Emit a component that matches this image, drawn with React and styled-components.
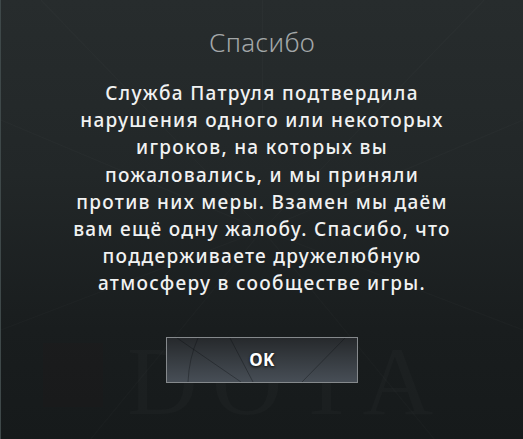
import React from "react";
import styled, { createGlobalStyle } from "styled-components";

const GlobalStyle = createGlobalStyle`
  html, body {
    margin: 0;
    padding: 0;
    background: #1b1f20;
  }
`;

// line breaks as in the game dialog
const lines = [
  "Служба Патруля подтвердила",
  "нарушения одного или некоторых",
  "игроков, на которых вы",
  "пожаловались, и мы приняли",
  "против них меры. Взамен мы даём",
  "вам ещё одну жалобу. Спасибо, что",
  "поддерживаете дружелюбную",
  "атмосферу в сообществе игры.",
];

const App = () => {
  return (
    <>
      <GlobalStyle />
      <Dialog>
        <Backdrop viewBox="0 0 523 439" preserveAspectRatio="none">
          <g stroke="rgba(255,255,255,0.02)" strokeWidth="1.2" fill="none">
            <path d="M40 0 L262 230 L484 0" />
            <path d="M0 120 L262 230 L523 120" />
            <path d="M90 439 L262 230 L434 439" />
            <path d="M0 330 L262 230 L523 330" />
            <path d="M262 0 L262 120" />
          </g>
        </Backdrop>
        <Watermark aria-hidden="true">
          <Emblem />
          <Wordmark>DOTA</Wordmark>
        </Watermark>

        <Title>Спасибо</Title>
        <Message>
          {lines.map((line) => (
            <Line key={line}>{line}</Line>
          ))}
        </Message>
        <Button>
          <ButtonLines viewBox="0 0 190 44" preserveAspectRatio="none">
            <g stroke="rgba(12,14,16,0.35)" strokeWidth="1" fill="none">
              <path d="M10 0 L74 44" />
              <path d="M31 0 Q22 20 21 44" />
              <path d="M63 0 L86 44" />
              <path d="M178 0 L135 44" />
            </g>
          </ButtonLines>
          <ButtonText>OK</ButtonText>
        </Button>
      </Dialog>
    </>
  );
};

export default App;

const Dialog = styled.div`
  position: relative;
  overflow: hidden;
  box-sizing: border-box;
  width: 523px;
  height: 439px;
  border-left: 1px solid #3e4849;
  background: linear-gradient(180deg, #272c2d 0%, #222728 40%, #191d1e 75%, #161a1b 100%);
  display: flex;
  flex-direction: column;
  align-items: center;
  padding-top: 25px;
  font-family: "Noto Sans", "Open Sans", sans-serif;
`;

const Backdrop = styled.svg`
  position: absolute;
  inset: 0;
  width: 100%;
  height: 100%;
  pointer-events: none;
`;

const Watermark = styled.div`
  position: absolute;
  left: 42px;
  top: 332px;
  display: flex;
  align-items: flex-start;
  gap: 24px;
  pointer-events: none;
`;

const Emblem = styled.div`
  width: 60px;
  height: 64px;
  margin-top: 11px;
  background: rgba(60, 22, 20, 0.09);
`;

const Wordmark = styled.div`
  font-family: "Liberation Serif", serif;
  font-size: 98px;
  line-height: 1;
  letter-spacing: 14px;
  color: rgba(255, 255, 255, 0.018);
`;

const Title = styled.h1`
  position: relative;
  margin: 0;
  font-size: 26px;
  font-weight: 300;
  line-height: 34px;
  color: #a3a7a8;
  letter-spacing: 0.3px;
`;

const Message = styled.p`
  position: relative;
  margin: 21px 0 0;
  text-align: center;
  font-size: 19px;
  line-height: 27.2px;
  font-weight: 500;
  letter-spacing: 1.3px;
  color: #f1f2f2;
`;

const Line = styled.span`
  display: block;
  white-space: nowrap;
`;

const Button = styled.button`
  position: relative;
  overflow: hidden;
  margin-top: 39px;
  width: 192px;
  height: 46px;
  padding: 0;
  border: 1px solid #85898c;
  background: linear-gradient(180deg, #26292c 0%, #353a3f 45%, #474e56 100%);
  cursor: pointer;
`;

const ButtonLines = styled.svg`
  position: absolute;
  inset: 0;
  width: 100%;
  height: 100%;
`;

const ButtonText = styled.span`
  position: relative;
  font-family: "Noto Sans", "Open Sans", sans-serif;
  font-size: 17px;
  font-weight: 700;
  letter-spacing: 0.5px;
  color: #ffffff;
  text-shadow: 0 1px 3px rgba(0, 0, 0, 0.9);
`;
